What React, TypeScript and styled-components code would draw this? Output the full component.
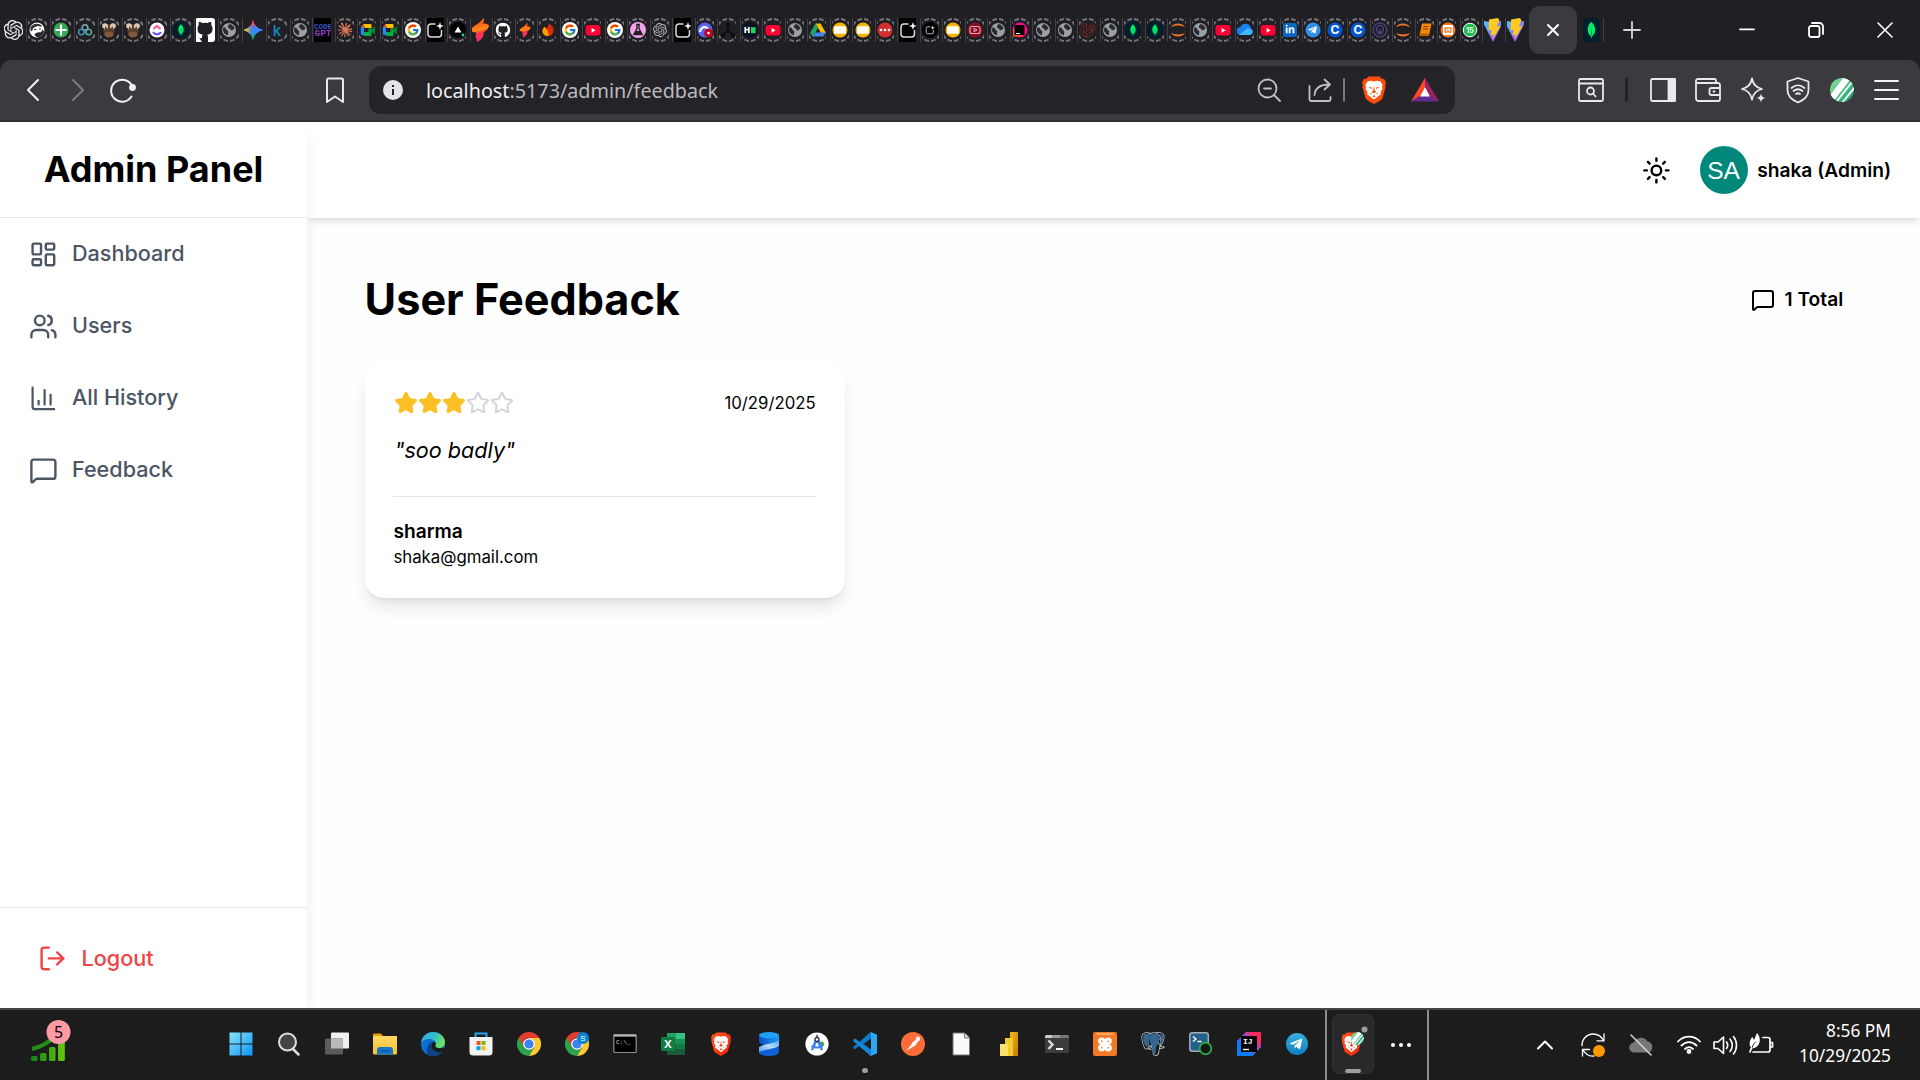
import React from "react";
import styled, { createGlobalStyle, css } from "styled-components";
import { LayoutDashboard, Users, MessageSquare, LogOut, Sun, Star } from "lucide-react";
import { FcGoogle } from "react-icons/fc";
import { FaTelegramPlane, FaGithub, FaLinkedinIn } from "react-icons/fa";
import {
  SiOpenai,
  SiLaravel,
  SiMongodb,
  SiXampp,
  SiPostgresql,
  SiClaude,
} from "react-icons/si";

const Global = createGlobalStyle`
  * { box-sizing: border-box; }
  body { margin: 0; background: #fff; overflow: hidden; font-family: Inter, "Liberation Sans", sans-serif; color: #000; }
  h1, h2, p { margin: 0; }
  svg { display: block; flex-shrink: 0; }
`;

/* ---------- shell ---------- */

const Screen = styled.div`
  width: 1920px;
  height: 1080px;
  display: flex;
  flex-direction: column;
  overflow: hidden;
`;

const TabStrip = styled.div`
  height: 60px;
  flex-shrink: 0;
  display: flex;
  align-items: center;
  padding-left: 1.7px;
  background: #201f24;
`;

const Tab = styled.div<{ $wide?: boolean; $first?: boolean }>`
  width: ${(p) => (p.$wide ? 24 : 22.5)}px;
  height: 24px;
  flex-shrink: 0;
  padding-left: 1.2px;
  border-left: 1px solid ${(p) => (p.$first ? "transparent" : "#403f44")};
`;

const Favicon = styled.div<{ $wide?: boolean }>`
  width: ${(p) => (p.$wide ? 19 : 17)}px;
  height: 24px;
  overflow: hidden;
  display: flex;
  justify-content: center;
`;

const ActiveTab = styled.div`
  width: 48px;
  height: 48px;
  margin-left: 1.5px;
  border-radius: 11px;
  background: #3b3a3f;
  display: flex;
  align-items: center;
  justify-content: center;
`;

const LastTab = styled.div`
  height: 24px;
  padding: 0 3px 0 6px;
  border-right: 1.5px solid #403f44;
`;

const NewTab = styled.div`
  margin-left: 19px;
`;

const WindowControls = styled.div`
  margin-left: auto;
  padding-right: 26px;
  display: flex;
  gap: 51px;
`;

const ToolbarWrap = styled.div`
  background: #201f24;
  flex-shrink: 0;
`;

const Toolbar = styled.div`
  height: 62px;
  border-radius: 12px 12px 0 0;
  background: #3b3a3f;
  border-bottom: 2px solid #323136;
  display: flex;
  align-items: center;
  padding: 0 20px 0 21px;
`;

const NavButtons = styled.div`
  display: flex;
  align-items: center;
  gap: 15px;
`;

const BookmarkSlot = styled.div`
  margin-left: 186px;
`;

const AddressBar = styled.div`
  width: 1086px;
  height: 48px;
  margin-left: 22px;
  padding: 0 16px 0 14px;
  border-radius: 12px;
  background: #242328;
  display: flex;
  align-items: center;
`;

const Url = styled.span`
  margin-left: 23px;
  flex: 1;
  font: 400 19.75px/27px "Noto Sans", "Open Sans", sans-serif;
  color: #b9b9be;
  b { font-weight: 400; color: #ededf2; }
`;

const AddressActions = styled.div`
  display: flex;
  align-items: center;
`;

const Gap = styled.span<{ $w: number }>`
  width: ${(p) => p.$w}px;
`;

const Rule = styled.span<{ $color: string; $w?: number; $h?: number }>`
  width: ${(p) => p.$w ?? 2}px;
  height: ${(p) => p.$h ?? 24}px;
  border-radius: 1px;
  background: ${(p) => p.$color};
`;

const Extensions = styled.div`
  margin-left: auto;
  display: flex;
  align-items: center;
`;

/* ---------- page ---------- */

const Page = styled.div`
  flex: 1;
  min-height: 0;
  display: flex;
  background: #fff;
`;

const Sidebar = styled.aside`
  width: 307px;
  flex-shrink: 0;
  display: flex;
  flex-direction: column;
  background: #fff;
  box-shadow: 0 12px 18px -3.6px rgba(0, 0, 0, 0.1), 0 4.8px 7.2px -4.8px rgba(0, 0, 0, 0.1);
  z-index: 2;
  clip-path: inset(0 -30px 0 0);
`;

const Brand = styled.h2`
  height: 96px;
  display: flex;
  align-items: center;
  justify-content: center;
  border-bottom: 1px solid #e5e7eb;
  font-size: 36px;
  font-weight: 700;
  line-height: 43px;
`;

const Nav = styled.nav`
  flex: 1;
`;

const itemBase = css`
  display: flex;
  align-items: center;
  gap: 14.4px;
  font-size: 21.6px;
  line-height: 33.6px;
  font-weight: 500;
`;

const NavItem = styled.a`
  ${itemBase}
  height: 72px;
  padding-left: 28.8px;
  color: #4b5563;
`;

const SidebarFooter = styled.div`
  height: 101px;
  padding: 1px 38.4px 0;
  border-top: 1px solid #e5e7eb;
  display: flex;
  align-items: center;
`;

const LogoutButton = styled.a`
  ${itemBase}
  color: #ef4444;
`;

const Main = styled.div`
  flex: 1;
  display: flex;
  flex-direction: column;
`;

const TopBar = styled.header`
  height: 96px;
  padding-right: 28.8px;
  display: flex;
  align-items: center;
  justify-content: flex-end;
  position: relative;
  z-index: 1;
  background: #fff;
  box-shadow: 0 4.8px 7.2px -1.2px rgba(0, 0, 0, 0.1), 0 2.4px 4.8px -2.4px rgba(0, 0, 0, 0.1);
`;

const Avatar = styled.div`
  width: 48px;
  height: 48px;
  margin: 0 9.6px 0 28.8px;
  border-radius: 50%;
  background: #00897b;
  color: #fff;
  display: flex;
  align-items: center;
  justify-content: center;
  font: 400 24.6px/49px "Liberation Sans", sans-serif;
`;

const UserName = styled.span`
  font-size: 19.2px;
  font-weight: 600;
`;

const Content = styled.main`
  flex: 1;
  padding: 57.6px;
  background: #fefefe;
`;

const TitleRow = styled.div`
  height: 48px;
  margin-bottom: 38.4px;
  padding-right: 19.2px;
  display: flex;
  align-items: center;
  justify-content: space-between;
`;

const Title = styled.h1`
  font-size: 43.2px;
  font-weight: 700;
  line-height: 49px;
`;

const Total = styled.div`
  display: flex;
  align-items: center;
  gap: 9.6px;
  font-size: 19.2px;
  font-weight: 600;
  line-height: 28.8px;
`;

const Card = styled.article`
  width: 480px;
  padding: 28.8px;
  border-radius: 19.2px;
  background: #fff;
  box-shadow: 0 12px 18px -3.6px rgba(0, 0, 0, 0.1), 0 4.8px 7.2px -4.8px rgba(0, 0, 0, 0.1);
`;

const CardHead = styled.div`
  height: 24px;
  margin-bottom: 19.2px;
  display: flex;
  align-items: center;
  justify-content: space-between;
`;

const Stars = styled.div`
  display: flex;
  padding-left: 1px;
`;

const DateText = styled.span`
  font-size: 16.8px;
  line-height: 24px;
`;

const Quote = styled.p`
  padding-left: 1px;
  font-size: 21.6px;
  line-height: 33.6px;
  font-style: italic;
  margin-bottom: 28.8px;
`;

const Author = styled.div`
  border-top: 1px solid #e5e7eb;
  padding-top: 19.2px;
`;

const AuthorName = styled.p`
  font-size: 19.2px;
  line-height: 28.8px;
  font-weight: 600;
`;

const AuthorMail = styled.p`
  font-size: 16.8px;
  line-height: 24px;
`;

/* ---------- taskbar ---------- */

const Taskbar = styled.footer`
  height: 72px;
  flex-shrink: 0;
  background: #1c1c1c;
  border-top: 2px solid #444;
  display: flex;
  align-items: center;
  padding-right: 29px;
`;

const Widget = styled.div`
  width: 217px;
  padding: 0 0 5px 28px;
`;

const Apps = styled.div`
  display: flex;
`;

const AppSlot = styled.div`
  width: 48.03px;
  height: 70px;
  display: flex;
  flex-direction: column;
  align-items: center;
  padding-top: 22px;
`;

const Running = styled.span<{ $w: number; $h: number; $top: number }>`
  width: ${(p) => p.$w}px;
  height: ${(p) => p.$h}px;
  margin-top: ${(p) => p.$top}px;
  border-radius: 3px;
  background: #9d9d9d;
`;

const ActiveApps = styled.div`
  width: 104px;
  height: 70px;
  margin-left: 4px;
  border: solid #8d8d8d;
  border-width: 0 2px;
  display: flex;
  align-items: center;
  padding-left: 5px;
  gap: 17px;
`;

const ActiveApp = styled.div`
  width: 42px;
  height: 60px;
  margin-top: -2px;
  border-radius: 7px;
  border: 1px solid #333;
  background: #292929;
  display: flex;
  flex-direction: column;
  align-items: center;
  padding-top: 9px;
`;

const Tray = styled.div`
  margin-left: auto;
  display: flex;
  align-items: center;
`;

const Clock = styled.div`
  width: 117.5px;
  padding-bottom: 3px;
  text-align: right;
  color: #fff;
  font: 400 17.3px/24.5px "Noto Sans", "Open Sans", sans-serif;
`;

/* ---------- favicons (24 x 24) ---------- */

const Ring = () => (
  <circle cx="12" cy="12" r="11" fill="none" stroke="#75747a" strokeWidth="2" pathLength="100"
    strokeDasharray="6.9 3.1" strokeDashoffset="-1.55" transform="rotate(-90 12 12)" />
);

const Globe = () => (
  <>
    <circle cx="12" cy="12" r="7" fill="#9aa0a6" />
    <path d="M6.6 9.2c2 .2 2.6 1 2.8 2.3.2 1 1.7.8 1.9 2 .2 1-.4 1.5-.3 3.7-2.7-.3-5-2.6-5.1-5.4zM12 6.3c2.8-.2 5.2 2 5.5 4.7-1.3.3-2 1.6-3.3 1.3-1.2-.3-.4-1.5-1.7-1.9-1.3-.4-2.1-1.3-1.5-2.3.3-.6 1-.8 1-1.8z" fill="#2a2a2f" />
  </>
);

const Leaf = () => <SiMongodb x={6} y={6} size={12} color="#00ed64" />;
const Youtube = () => (
  <>
    <rect x="4.5" y="7" width="15" height="10.6" rx="3" fill="#ff0033" />
    <path d="M10.6 9.9v4.8l4-2.4z" fill="#fff" />
  </>
);
const Vite = () => (
  <>
    <path d="M1 2.6 12 24 23 2.6 12 4.5z" fill="url(#viteBody)" />
    <path d="M17 0 8 1.6 7.5 12.500l3.2-.7-1.2 5.700 3.200-.9-1.200 5L19.500 8l-3.700.6L18.500 2.500z" fill="#ffc91f" />
  </>
);
const Meet = () => (
  <>
    <path d="M5 8.500 8 6h6.500a1 1 0 0 1 1 1v3h-7v-1.500z" fill="#fbbc04" />
    <path d="M4.800 9H8v8H6a1.200 1.200 0 0 1-1.200-1.200z" fill="#2684fc" />
    <path d="M8 14h4.500v-3.500h3V17a1 1 0 0 1-1 1H8z" fill="#00ac47" />
    <path d="M15 11.500 19 8v8.500l-4-3.200z" fill="#00832d" />
    <path d="M4.800 9 8 6v3z" fill="#ea4335" />
  </>
);
const Donkey = () => (
  <>
    <ellipse cx="12" cy="13" rx="5.600" ry="6.500" fill="#5d4030" />
    <path d="M5.500 6c2-1.500 4.500-1 5.500 1v3L8 11.500 5 9zM18.500 6c-2-1.500-4.500-1-5.500 1v3l3 1.500L19 9z" fill="#d9c6ac" />
    <path d="M8 8.500 10 10l-1.500 2zM16 8.500 14 10l1.500 2z" fill="#2a1b14" />
    <ellipse cx="12" cy="16.500" rx="4.400" ry="2.800" fill="#84583c" />
  </>
);
const Sparkle = ({ small }: { small?: boolean }) => (
  <g transform={small ? "translate(5.500 5.500) scale(.54)" : undefined}>
    <path d="M12.500 6H8a3 3 0 0 0-3 3v7a3 3 0 0 0 3 3h7.500a3 3 0 0 0 3-3v-4" fill="none" stroke="#ddd" strokeWidth="1.500" />
    <path d="m17 4 1 3 3 1-3 1-1 3-1-3-3-1 3-1z" fill="#fff" />
  </g>
);
const Swoosh = () => (
  <path d="M14.500 4.500c.3 1.500 0 2.600-.8 3.800 1.700-.2 3 .2 4 1.200-.6 1.700-1.700 3-3.300 4 .3 2.300-1.100 4.500-4.200 6 .1-1.500-.2-2.600-1-3.500.5-.9.7-1.600.6-2.400-1.300.2-2.500-.3-3.400-1.400C7.500 9.500 11.500 9 14.500 4.500z" fill="url(#swoosh)" />
);
const Flame = () => (
  <>
    <path d="M12.500 5c3 2.500 5.500 4 5 8-.4 3.500-2.800 5-5.500 5s-5.300-1.700-5.500-4.800C6.400 11 8 10.300 8.500 8.500c1 .6 1.500 1 2 2 1.200-1.500 2.200-3 2-5.500z" fill="#dd2c00" />
    <path d="M8 9c3 2 5 4 4.500 9-3 .3-6-1.500-6-5C6.500 11 7.500 10.500 8 9z" fill="#ffa000" />
  </>
);
const Slides = () => (
  <>
    <circle cx="12" cy="12" r="7.500" fill="#f4b400" /><rect x="6.200" y="8.200" width="11.600" height="7.500" rx=".6" fill="#fff" />
  </>
);
const Jupyter = () => (
  <path d="M4.800 9.200C8 4.200 16 4.200 19.200 9.200 15.500 6.900 8.500 6.900 4.800 9.200zM4.800 14.800c3.200 5 11.200 5 14.400 0-3.700 2.300-10.700 2.300-14.400 0z" fill="#f37726" />
);
const Letter = ({ c, fill, size = 11, y = 16 }: { c: string; fill: string; size?: number; y?: number }) => (
  <text x="12" y={y} textAnchor="middle" fill={fill} fontFamily="Inter, sans-serif" fontWeight="700" fontSize={size}>{c}</text>
);
const Disc = ({ fill, r = 7.5 }: { fill: string; r?: number }) => <circle cx="12" cy="12" r={r} fill={fill} />;

type Glyph = { bare?: boolean; art: React.ReactNode };

const geminiStar = "M12 1c1 6.500 4.500 10 11 11-6.500 1-10 4.500-11 11C11 16.500 7.500 13 1 12 7.500 11 11 7.500 12 1z";

const glyphs: Record<string, Glyph> = {
  openaiBare: { bare: true, art: <SiOpenai x={2.5} y={2} size={20} color="#eee" /> },
  person: { art: <><Disc fill="#fff" /><path d="M5.500 9.500C7 6 12 4.500 16 7l1 2-4-1-3 1-2 1.500-1 3-1.500-1z" fill="#3a3334" /><path d="M9.500 16.500c1.500-2 4-2.500 6-2l2.500-3 1 2.500c-.5 2.500-2.500 4.500-5 5.200-2 .2-4-.7-4.500-2.700z" fill="#29252a" /><path d="M9 11.500h2.500M14 11h2" stroke="#3a3334" strokeWidth="1.200" /></> },
  plus: { art: <><Disc fill="#34a853" /><path d="M12 6.500v11M6.500 12h11" stroke="#fff" strokeWidth="2" /></> },
  loops: { art: <g fill="none" strokeWidth="1.600"><circle cx="12" cy="9.500" r="2.800" stroke="#7fa6b8" /><circle cx="8.300" cy="14" r="2.800" stroke="#3e93b5" /><circle cx="15.700" cy="14" r="2.800" stroke="#5aa8a0" /></g> },
  donkey: { art: <Donkey /> },
  clickup: { art: <><Disc fill="#fff" /><path d="m8.500 11 3.500-3.200 3.500 3.200" fill="none" stroke="#f5509a" strokeWidth="2" /><path d="M8 14.200c2 2.800 6 2.800 8 0" fill="none" stroke="#6a5cff" strokeWidth="2.200" /></> },
  mongo: { art: <><Disc fill="#001e2b" r={8.5} /><Leaf /></> },
  githubBare: { bare: true, art: <><rect x="2" width="20" height="24" rx="3" fill="#fff" /><path d="M9 24v-4c-3 .6-3.500-1-4-2M15 24v-5c0-1-.3-1.700-.8-2.200 3.600-.5 5.300-2.300 5.300-6 0-1.600-.5-2.800-1.300-3.700.3-1.200.2-2.300-.2-3.300-1.400.1-2.500.6-3.500 1.300a11 11 0 0 0-5 0C8.500 4.400 7.400 4 6 3.800c-.4 1-.5 2.100-.2 3.300-.8.900-1.300 2.100-1.300 3.700 0 3.700 1.700 5.500 5.300 6-.4.400-.7 1-.8 1.700V24z" fill="#201f24" /></> },
  globe: { art: <Globe /> },
  gemini: { bare: true, art: <><path d={geminiStar} fill="url(#gemV)" /><path d={geminiStar} fill="url(#gemH)" /></> },
  kaggle: { art: <text x="12" y="17.500" textAnchor="middle" fill="#0d8fbf" fontFamily="Inter, sans-serif" fontWeight="500" fontSize="15">k</text> },
  codegpt: { bare: true, art: <><rect width="24" height="24" fill="#000" /><text x="12" y="11" textAnchor="middle" fill="#3d55c0" fontFamily="Liberation Mono, monospace" fontWeight="700" fontSize="7.500">CODE</text><text x="12" y="18" textAnchor="middle" fill="#8840c8" fontFamily="Liberation Mono, monospace" fontWeight="700" fontSize="9.500">GPT</text></> },
  claude: { art: <SiClaude x={4.5} y={4.5} size={15} color="#d97757" /> },
  meet: { art: <Meet /> },
  google: { art: <><Disc fill="#fff" r={8} /><FcGoogle x={5.5} y={5.5} size={13} /></> },
  sparkBox: { bare: true, art: <><rect width="24" height="24" fill="#000" /><Sparkle /></> },
  sparkDisc: { art: <><Disc fill="#000" r={8} /><Sparkle small /></> },
  vercel: { art: <><Disc fill="#000" r={8} /><path d="m12 8.500 3.500 6h-7z" fill="#fff" /><circle cx="17" cy="17" r="1.400" fill="#16d3b0" /></> },
  swooshBare: { bare: true, art: <g transform="translate(-8 -8) scale(1.650)"><Swoosh /></g> },
  github: { art: <FaGithub x={4.5} y={4.5} size={15} color="#fff" /> },
  swoosh: { art: <Swoosh /> },
  flame: { art: <Flame /> },
  youtube: { art: <Youtube /> },
  flask: { art: <><Disc fill="#f5a3ec" r={8} /><path d="M10 6.500h4M11 6.500v4L7.800 16.500h8.400L13 10.500v-4" fill="none" stroke="#222" strokeWidth="1.400" /><path d="m9.800 13-2 3.500h8.400l-2-3.500z" fill="#222" /></> },
  openai: { art: <SiOpenai x={5} y={5} size={14} color="#b8b8bb" /> },
  discord: { art: <><Disc fill="#5865f2" /><path d="M7 14c.5-4 3-5.500 6.500-4.500l3 3" fill="none" stroke="#fff" strokeWidth="2.200" /><circle cx="15.500" cy="15" r="4.400" fill="#c4001d" /><circle cx="15.500" cy="15" r="1.300" fill="#fff" /></> },
  nodes: { art: <g stroke="#0c0c0e" strokeWidth="1.400" fill="#0c0c0e"><path d="M12 6v7l-5 4M12 13l5 4" fill="none" /><circle cx="12" cy="6.500" r="1.300" /><circle cx="7" cy="17" r="1.300" /><circle cx="17" cy="17" r="1.300" /></g> },
  he: { art: <><Disc fill="#0a1022" r={8} /><text x="9" y="15" textAnchor="middle" fill="#fff" fontFamily="Inter, sans-serif" fontWeight="900" fontSize="8">H</text><rect x="13" y="9.200" width="4.600" height="6" fill="#1ed760" /></> },
  drive: { art: <><path d="M9.500 5.500h5L20 15h-5z" fill="#fbbc04" /><path d="M9.500 5.500 12 10l-5 9-3-4z" fill="#1fa463" /><path d="M9.500 14.500H20L17.500 18.500H7z" fill="#4285f4" /></> },
  slides: { art: <Slides /> },
  dots: { art: <><Disc fill="#d32f2f" /><g fill="#fff"><circle cx="8" cy="12" r="1.300" /><circle cx="12" cy="12" r="1.300" /><circle cx="16" cy="12" r="1.300" /></g></> },
  darkTube: { art: <><Disc fill="#8c0d22" /><rect x="7" y="8.500" width="10" height="7" rx="2" fill="none" stroke="#e7a9b2" strokeWidth="1.100" /><path d="M11 10.300v3.400l3-1.700z" fill="none" stroke="#e7a9b2" /></> },
  jet: { art: <><Disc fill="#ff0a8a" /><path d="M5 11v7.500h8l4-3z" fill="#ff5a2c" /><rect x="6.500" y="7" width="10" height="10" fill="#000" /><path d="M8 15.500h4" stroke="#fff" /></> },
  laravel: { art: <SiLaravel x={4.5} y={4.5} size={15} color="#b82a1e" /> },
  jupyter: { art: <Jupyter /> },
  cloud: { art: <><path d="M8 17a4 4 0 0 1-.5-8A5.500 5.500 0 0 1 18 10.500 3.400 3.400 0 0 1 17.500 17z" fill="#1a7ff0" /><path d="m6 17 8-6.500c2-1 5 .5 5 3.300 0 2-1.500 3.200-3 3.200z" fill="#43b8ff" /></> },
  linkedin: { art: <><rect x="5" y="5" width="14" height="14" rx="2.500" fill="#0a66c2" /><FaLinkedinIn x={7} y={6.5} size={10} color="#fff" /></> },
  telegram: { art: <><Disc fill="#2f8fe8" /><FaTelegramPlane x={6.5} y={7} size={10} color="#fff" /></> },
  coursera: { art: <><Disc fill="#0056d2" /><Letter c="C" fill="#fff" size={12} y={16.4} /></> },
  purple: { art: <g fill="none" stroke="#5d4c9c"><circle cx="12" cy="12" r="6.800" strokeWidth="1.200" strokeDasharray="2 .6" /><circle cx="12" cy="11" r="3.600" /><path d="M12 11v6M9 16c1-2 5-2 6 0" /></g> },
  book: { art: <><path d="M9 5.500h9.500l-2.500 12H6.500z" fill="#f58a07" /><path d="M6.500 15.500h9.800l-.4 2.500H7z" fill="#c25e00" /><path d="M10.500 8.500h5M10 11h5" stroke="#7a3a00" /></> },
  xampp: { art: <><Disc fill="#f37623" /><SiXampp x={7} y={7} size={10} color="#fff" /></> },
  fifteen: { art: <><Disc fill="#1bbf4b" r={6.8} /><circle cx="12" cy="12" r="6.800" fill="none" stroke="#fff" strokeWidth="1" /><Letter c="15" fill="#fff" size={7} y={14.5} /></> },
  vite: { bare: true, art: <Vite /> },
};

const wideTabs = "openaiBare person plus loops donkey donkey clickup mongo githubBare globe gemini kaggle".split(" ");
const narrowTabs = (
  "globe codegpt claude meet meet google sparkBox vercel swooshBare github swoosh flame google youtube google flask openai sparkBox " +
  "discord nodes he youtube globe drive slides slides dots sparkBox sparkDisc slides darkTube globe jet globe globe laravel globe " +
  "mongo mongo jupyter globe youtube cloud youtube linkedin telegram coursera coursera purple jupyter book xampp fifteen vite vite"
).split(" ");

const Fav = ({ name, wide }: { name: string; wide?: boolean }) => (
  <Favicon $wide={wide}>
    <svg width="24" height="24" viewBox="0 0 24 24">
      {!glyphs[name].bare && <Ring />}
      {glyphs[name].art}
    </svg>
  </Favicon>
);

const GradientDefs = styled.svg`
  position: absolute;
  width: 0;
  height: 0;
`;

const Gradients = () => (
  <GradientDefs>
    <defs>
      <linearGradient id="gemV" x1="0" y1="0" x2="0" y2="1"><stop offset="0" stopColor="#ff3d3d" /><stop offset=".22" stopColor="#e8506a" /><stop offset=".42" stopColor="#3c86f5" /><stop offset=".62" stopColor="#3c86f5" /><stop offset=".85" stopColor="#12b25a" /><stop offset="1" stopColor="#0fb452" /></linearGradient>
      <linearGradient id="gemH" x1="0" y1="0" x2="1" y2="0"><stop offset="0" stopColor="#f9c20a" /><stop offset=".2" stopColor="#e9bd20" /><stop offset=".42" stopColor="#f9c20a" stopOpacity="0" /></linearGradient>
      <linearGradient id="swoosh" x1=".4" y1="0" x2=".6" y2="1"><stop offset="0" stopColor="#ff3a1a" /><stop offset=".5" stopColor="#ff8a1c" /><stop offset=".6" stopColor="#fb3a3f" /><stop offset="1" stopColor="#f02a8a" /></linearGradient>
      <linearGradient id="viteBody" x1="0" y1="0" x2="1" y2="1"><stop offset="0" stopColor="#41d1ff" /><stop offset="1" stopColor="#bd34fe" /></linearGradient>
      <linearGradient id="win" x1="0" y1="0" x2="1" y2="1"><stop offset="0" stopColor="#8be3ff" /><stop offset="1" stopColor="#0a94f5" /></linearGradient>
      <linearGradient id="folder" x1="0" y1="0" x2="0" y2="1"><stop offset="0" stopColor="#ffd968" /><stop offset="1" stopColor="#fcbf25" /></linearGradient>
      <linearGradient id="edgeTop" x1="0" y1="0" x2="1" y2=".4"><stop offset="0" stopColor="#2aa9e8" /><stop offset=".6" stopColor="#35c1c9" /><stop offset="1" stopColor="#6be35c" /></linearGradient>
      <linearGradient id="blueCyl" x1="0" y1="0" x2="1" y2="0"><stop offset="0" stopColor="#0a4fc4" /><stop offset="1" stopColor="#1c9cff" /></linearGradient>
      <linearGradient id="band" x1="0" y1="1" x2="1" y2="0"><stop offset="0" stopColor="#4d9ff0" /><stop offset=".5" stopColor="#b5dcfb" /><stop offset="1" stopColor="#5fa9f3" /></linearGradient>
      <linearGradient id="tg" x1="0" y1="0" x2="0" y2="1"><stop offset="0" stopColor="#37aee2" /><stop offset="1" stopColor="#0f7fc0" /></linearGradient>
      <linearGradient id="chart" x1="3" y1="0" x2="37" y2="0" gradientUnits="userSpaceOnUse"><stop offset="0" stopColor="#168016" /><stop offset="1" stopColor="#66c80a" /></linearGradient>
      <linearGradient id="brave" x1="0" y1="0" x2="1" y2="1"><stop offset="0" stopColor="#ff5a1f" /><stop offset="1" stopColor="#f5200a" /></linearGradient>
      <linearGradient id="ij" x1="0" y1="1" x2="1" y2="0"><stop offset=".3" stopColor="#087cfa" /><stop offset=".6" stopColor="#a04ad0" /><stop offset=".8" stopColor="#fe2857" /></linearGradient>
      <linearGradient id="leafDisc" x1="0" y1="0" x2="1" y2="1"><stop offset="0" stopColor="#8fe39c" /><stop offset="1" stopColor="#0b9a6d" /></linearGradient>
      <linearGradient id="pbi" x1="0" y1="0" x2="1" y2="1"><stop offset="0" stopColor="#f0b90f" /><stop offset="1" stopColor="#c8780c" /></linearGradient>
    </defs>
  </GradientDefs>
);

/* ---------- shared art ---------- */

const Lion = ({ fill = "#ff4e0a", w = 24, h = 28 }: { fill?: string; w?: number; h?: number }) => (
  <svg width={w} height={h} viewBox="0 0 24 28" preserveAspectRatio="none">
    <path d="M6.500.5h11L20 3l2-.3L24 6.500l-.8 2.700.5 1.300-3.200 11.500c-.6 2-6.500 5-8.500 6-2-1-7.900-4-8.500-6L.3 10.500l.5-1.300L0 6.500l2-3.800L4 3z" fill={fill} />
    <path d="m12 5.500 3-.8 3.200.5 2.300 3.300-.5 3 .5 1.500-2 3 .5 2-3 2.500L12 23.500 8 20.500 5 18l.5-2-2-3 .5-1.500-.5-3 2.300-3.300L9 4.700z" fill="#fff" />
    <path d="m6 10.500 4.300 1.200-.8 1.400zM18 10.500l-4.300 1.200.8 1.400zM12 10l.8 4.500 1.600 1.200L12 17.200l-2.400-1.500 1.600-1.200zM6.500 14.500l1.300 2.600 2.200.5-1.600.9zM17.500 14.500l-1.300 2.600-2.200.5 1.600.9zM12 19l1.500 1.200L12 21.500l-1.500-1.300z" fill={fill} />
  </svg>
);

const Striped = ({ size = 24 }: { size?: number }) => (
  <svg width={size} height={size} viewBox="0 0 24 24">
    <clipPath id="stripeClip"><circle cx="12" cy="12" r="12" /></clipPath>
    <g clipPath="url(#stripeClip)">
      <rect width="24" height="24" fill="url(#leafDisc)" />
      <path d="M2 20 18-1" stroke="#fff" strokeWidth="6.500" />
      <path d="M7 23 22 4M12 25 25 9" stroke="#fff" strokeWidth="2" />
    </g>
  </svg>
);

const Line = ({ w = 24, h = 24, color = "#e8e8ed", sw = 1.8, children }: { w?: number; h?: number; color?: string; sw?: number; children: React.ReactNode }) => (
  <svg width={w} height={h} viewBox={`0 0 ${w} ${h}`} fill="none" stroke={color} strokeWidth={sw} strokeLinecap="round" strokeLinejoin="round">{children}</svg>
);

const Chrome = ({ badge }: { badge?: boolean }) => (
  <svg width="24" height="24" viewBox="0 0 24 24">
    <path d="M12 12 1.600 6A12 12 0 0 0 12 24l5.200-9z" fill="#2ba24c" />
    <path d="M12 6h10.400A12 12 0 0 1 12 24l5.200-9z" fill="#fcc934" />
    <path d="M1.600 6A12 12 0 0 1 22.400 6H12a6 6 0 0 0-5.200 9z" fill="#e33b2e" />
    <circle cx="12" cy="12" r="5.800" fill="#fff" /><circle cx="12" cy="12" r="4.600" fill="#3b82f0" />
    {badge && <><circle cx="18" cy="6" r="6" fill="#0b84d0" /><text x="18" y="9" textAnchor="middle" fontSize="8" fill="#fff" fontFamily="Liberation Sans, sans-serif">S</text></>}
  </svg>
);

const Svg = ({ children }: { children: React.ReactNode }) => <svg width="24" height="24" viewBox="0 0 24 24">{children}</svg>;

const apps: { id: string; art: React.ReactNode; running?: boolean }[] = [
  { id: "start", art: <Svg><path d="M.5.5h11v11H.5zM12.500.5h11v11h-11zM.5 12.500h11v11H.5zM12.500 12.500h11v11h-11z" fill="url(#win)" /></Svg> },
  { id: "search", art: <Svg><circle cx="10.500" cy="10" r="8.500" fill="#444" stroke="#dcdfe2" strokeWidth="2" /><path d="m16 17 5.500 5.500" stroke="#dcdfe2" strokeWidth="2.500" strokeLinecap="round" /></Svg> },
  { id: "taskview", art: <Svg><rect x="6" y=".5" width="18" height="16" rx="1" fill="#f1f1f1" /><rect y="6.500" width="18" height="16" rx="1" fill="#5c5c5c" /><path d="M6 6.500h12v10H6z" fill="#b9b9b9" /></Svg> },
  { id: "files", art: <Svg><path d="M0 2.500A1 1 0 0 1 1 1.500h7l2 2.500h13a1 1 0 0 1 1 1V9H0z" fill="#e2a00c" /><rect y="4" width="24" height="18.500" rx="1" fill="url(#folder)" /><path d="M4 22.500V18a3 3 0 0 1 3-3h10a3 3 0 0 1 3 3v4.500z" fill="#1277c9" /><path d="M7.500 19h9" stroke="#0b4f90" strokeWidth="1.200" /></Svg> },
  { id: "edge", art: <Svg><circle cx="12" cy="12" r="12" fill="#0c6fcf" /><path d="M0 11C1 4 6 0 12 0c7 0 12 5 12 10 0 4-3 6-6 6-2.500 0-4-.8-4-1.700 0-.6.9-1 .9-2.500C14.900 9.500 12.500 7 8.500 7 4 7 1 9 0 11z" fill="url(#edgeTop)" /><path d="M8.500 24C4 22 6 11 11 10c-2 2.500-1.500 8 3 10 3 1.200 6 .6 8-1.500-2 4-8 7-13.500 5.500z" fill="#103f86" /><path d="M14.200 14c.6-1 .8-3-.5-4.500-2.500 0-4 3-3.200 5.800.6 2 2 3.700 4.500 4.700 3 1 6 .3 7.500-1.500 1-1.500.5-3-.5-2.800-3 1-7 .5-7.800-1.700z" fill="#1c1c1c" /></Svg> },
  { id: "store", art: <Svg><path d="M6.500 6V1.500h11V6" fill="none" stroke="#22a7f0" strokeWidth="2" /><path d="M.5 5h23v15a3.500 3.500 0 0 1-3.500 3.500H4A3.500 3.500 0 0 1 .5 20z" fill="#f3f3f3" /><path d="M7.500 9h4v4h-4z" fill="#f25022" /><path d="M12.500 9h4v4h-4z" fill="#7fba00" /><path d="M7.500 14.200h4v4h-4z" fill="#00a4ef" /><path d="M12.500 14.200h4v4h-4z" fill="#ffb900" /></Svg> },
  { id: "chrome", art: <Chrome /> },
  { id: "chrome2", art: <Chrome badge /> },
  { id: "cmd", art: <Svg><rect x=".8" y="2.500" width="22.400" height="18" rx="1" fill="#000" stroke="#8e9196" strokeWidth="1.200" /><path d="M.8 3.800h22.400" stroke="#b8bcc0" strokeWidth="1.600" /><text x="3" y="11.500" fontSize="6" fill="#ddd" fontFamily="Liberation Mono, monospace">C:\_</text></Svg> },
  { id: "excel", art: <Svg><path d="M6 1h18v22H6z" fill="#21a366" /><path d="M15 1h9v6h-9z" fill="#33c481" /><path d="M6 7h18v5H6z" fill="#159154" /><path d="M6 12h18v11H6z" fill="#185c37" /><path d="M15 12h9v5h-9z" fill="#107c41" /><rect y="5" width="14" height="14" rx="1" fill="#107c41" /><text x="7" y="16" textAnchor="middle" fontSize="11" fontWeight="700" fill="#fff" fontFamily="Open Sans, sans-serif">X</text></Svg> },
  { id: "brave", art: <Lion fill="url(#brave)" w={20} h={24} /> },
  { id: "coil", art: <Svg><path d="M2 3.500C4 7 20 7 22 3.500V9c-3 2.500-9 3-13 4.500C5 13 2 11.500 2 9z" fill="url(#blueCyl)" /><path d="M2 20.500V16c2-1 9-2.500 14-4.500 4 1 6 2.500 6 4.500v4.500c-1 4.500-19 4.500-20 0z" fill="#1160d8" /><path d="M22 8v5.500C20 17 4 17.500 2 20.500V15.500C4 12 20 11.500 22 8z" fill="url(#band)" /><ellipse cx="12" cy="3.300" rx="10" ry="3.200" fill="#1fa0fb" /></Svg> },
  { id: "astudio", art: <Svg><circle cx="12" cy="12" r="11.600" fill="#fff" /><circle cx="16.500" cy="12" r="2.500" fill="#3aa757" /><path d="M10 7h4l4 11-2 .5L12 10 8 18.500 6 18z" fill="#3f7ff2" /><path d="M6.500 14c3 2 8 2 11 0" fill="none" stroke="#3f7ff2" strokeWidth="2.200" /><circle cx="12" cy="7.500" r="2" fill="#fff" stroke="#2a3350" strokeWidth="1.300" /><path d="M12 3v3" stroke="#2a3350" strokeWidth="1.500" /></Svg> },
  { id: "vscode", running: true, art: <Svg><path d="M17.500 0 24 2.800v18.400L17.500 24 6.500 13.500 2 17.300.3 16.200v-1.500L4 12z" fill="#0f78c4" /><path d="m.3 7.800 1.800-1.200L18 18.200V24L.3 9.200z" fill="#1687d6" /><path d="M17.500 0 24 2.800v18.400L17.500 24c.5-.3.5-.6.5-1V1c0-.4 0-.7-.5-1z" fill="#2aa8f2" /><path d="M18 6.500v11L10.700 12z" fill="#1c1c1c" /></Svg> },
  { id: "postman", art: <Svg><circle cx="12" cy="12" r="12" fill="#ff6c37" /><path d="m5 19 7-8.500 3 2.500z" fill="#fff" /><path d="m11 11 4.500-4 2 2L13.500 14z" fill="#fff" /><circle cx="17" cy="6.800" r="2.200" fill="#fff" /></Svg> },
  { id: "file", art: <Svg><path d="M4 1h11.500l5 5v17H4z" fill="#fafafa" stroke="#777" /><path d="M15.500 1v5h5" fill="#ddd" stroke="#777" /></Svg> },
  { id: "powerbi", art: <Svg><rect x="13" width="8" height="24" rx=".5" fill="url(#pbi)" /><path d="M8 6h8v18H8z" fill="#f3c92d" /><path d="M3 12h8v12H3z" fill="#fae16a" /></Svg> },
  { id: "terminal", art: <Svg><rect y="3" width="24" height="18" rx="1.500" fill="#3c3c3c" /><path d="M0 6V4.500A1.500 1.500 0 0 1 1.500 3h6v3z" fill="#ccc" /><path d="M7.500 3h8v3h-8z" fill="#999" /><path d="M15.500 3h7A1.500 1.500 0 0 1 24 4.500V6h-8.500z" fill="#777" /><path d="m3.500 8.500 4 4-4 4.500" fill="none" stroke="#ddd" strokeWidth="2.400" /><path d="M11 17h7" stroke="#fff" strokeWidth="2" /></Svg> },
  { id: "xampp", art: <Svg><rect width="24" height="24" rx="2" fill="#f37a24" /><path d="M3.500 2h17" stroke="#ffb98a" strokeWidth="1.400" /><rect x="6.500" y="7" width="4.500" height="4.500" rx="2.250" fill="none" stroke="#fff" strokeWidth="2.800" /><rect x="13" y="7" width="4.500" height="4.500" rx="2.250" fill="none" stroke="#fff" strokeWidth="2.800" /><rect x="6.500" y="13.500" width="4.500" height="4.500" rx="2.250" fill="none" stroke="#fff" strokeWidth="2.800" /><rect x="13" y="13.500" width="4.500" height="4.500" rx="2.250" fill="none" stroke="#fff" strokeWidth="2.800" /><path d="M10 10.500h4v4h-4z" fill="#fff" /><path d="M3 11.300h3.500v2.200H3zM17.500 11.300H21v2.200h-3.500z" fill="#f37a24" /></Svg> },
  { id: "postgres", art: <Svg><SiPostgresql x={0} y={0} size={24} color="#c2d0db" /><path d="M3 2.500c3-1.500 5-.5 6 .5l-1 9-2.500 3C3 13 1 6 3 2.500zM10 2c4-1.500 8 0 8 5 0 4-2 7-3 8l-.5 7h-3l-.5-8c-2-2-3-8-1-12zM19 2c3 .5 4.500 3 3 6.500l-3 4c.5-4 1-7 0-10.500z" fill="#336791" /></Svg> },
  { id: "psql", art: <Svg><rect x=".8" y=".8" width="18.500" height="18.500" rx="2.500" fill="#23618c" stroke="#a4adb5" strokeWidth="1.500" /><path d="m4 4.500 3 2.500-3 2.500M8.500 9.500h4" fill="none" stroke="#fff" strokeWidth="1.400" /><circle cx="16.500" cy="16.500" r="5.800" fill="#101a12" stroke="#31a843" strokeWidth="1.800" /></Svg> },
  { id: "idea", art: <Svg><path d="M0 9 6 3 9 0h15v15l-8.500 9H0z" fill="url(#ij)" /><path d="M4 4h16v16H4z" fill="#000" /><path d="M6 17.500h6" stroke="#fff" strokeWidth="1.400" /><text x="6" y="11.500" fontSize="8" fontWeight="700" fill="#fff" fontFamily="Liberation Mono, monospace">IJ</text></Svg> },
  { id: "telegram", art: <Svg><circle cx="12" cy="12" r="11" fill="url(#tg)" /><FaTelegramPlane x={4} y={5} size={14} color="#fff" /></Svg> },
];

const HistoryIcon = () => (
  <svg width="28.8" height="28.8" viewBox="0 0 24 24" fill="none" stroke="currentColor" strokeWidth="1.850" strokeLinecap="round" strokeLinejoin="round">
    <path d="M3 3v16a2 2 0 0 0 2 2h16" /><path d="M18 17V9" /><path d="M13 17V5" /><path d="M8 17v-3" />
  </svg>
);

const MessageBox = ({ size }: { size: number }) => (
  <svg width={size} height={size} viewBox="0 0 24 24" fill="none" stroke="currentColor" strokeWidth="2" strokeLinecap="round" strokeLinejoin="round">
    <path d="M21 15a2 2 0 0 1-2 2H7l-4 4V5a2 2 0 0 1 2-2h14a2 2 0 0 1 2 2z" />
  </svg>
);

/* ---------- sections ---------- */

const Tabs = () => (
  <TabStrip>
    {wideTabs.map((n, i) => <Tab key={i} $wide $first={i === 0}><Fav name={n} wide /></Tab>)}
    {narrowTabs.map((n, i) => <Tab key={i}><Fav name={n} /></Tab>)}
    <ActiveTab>
      <Line w={14} h={14} color="#fff" sw={2}><path d="m2 2 10 10M12 2 2 12" /></Line>
    </ActiveTab>
    <LastTab>
      <Favicon>
        <svg width="17" height="24" viewBox="0 0 17 24"><rect width="17" height="24" rx="5" fill="#001e2b" /><SiMongodb x={0} y={3.5} size={17} color="#00ed64" /></svg>
      </Favicon>
    </LastTab>
    <NewTab><Line w={18} h={18} color="#d6d6da"><path d="M9 1v16M1 9h16" /></Line></NewTab>
    <WindowControls>
      <Line w={18} h={18} color="#fff" sw={1.8}><path d="M2 8.300h14" /></Line>
      <Line w={18} h={18} color="#fff" sw={1.8}><rect x="2" y="5" width="10.500" height="11" rx="2" /><path d="M5 2h7.500A3.500 3.500 0 0 1 16 5.500V13" /></Line>
      <Line w={18} h={18} color="#fff" sw={1.6}><path d="m2 2 14 14M16 2 2 16" /></Line>
    </WindowControls>
  </TabStrip>
);

const BrowserBar = () => (
  <ToolbarWrap>
    <Toolbar>
      <NavButtons>
        <Line w={28} h={28} color="#f2f2f6" sw={2}><path d="M17 4 7 14l10 10" /></Line>
        <Line w={28} h={28} color="#7c7b80" sw={2}><path d="m9 4 10 10L9 24" /></Line>
        <Line w={30} h={28} color="#f2f2f6" sw={2}><path d="M24.500 20.500A11 11 0 1 1 25.500 11" /><circle cx="25.500" cy="11.500" r="2.400" fill="#f2f2f6" /></Line>
      </NavButtons>
      <BookmarkSlot><Line w={24} h={28} sw={2}><path d="M4 4a1.500 1.500 0 0 1 1.500-1.500h13A1.500 1.500 0 0 1 20 4v22l-8-5.500L4 26z" /></Line></BookmarkSlot>
      <AddressBar>
        <svg width="20" height="20" viewBox="0 0 20 20"><circle cx="10" cy="10" r="10" fill="#e3e3e8" /><path d="M10 9v6M10 5v2" stroke="#242328" strokeWidth="2" /></svg>
        <Url><b>localhost</b>:5173/admin/feedback</Url>
        <AddressActions>
          <Line color="#bfbfc4"><circle cx="10.500" cy="10.500" r="9" /><path d="m17 17 6 6M7 10.500h7" /></Line>
          <Gap $w={27} />
          <Line color="#bfbfc4"><path d="M1.500 8v13.500A1.500 1.500 0 0 0 3 23h18a1.500 1.500 0 0 0 1.500-1.500V19M6.500 17c.5-6 4-10.500 15-10.500M16.500 1.500l5.500 5-5.500 5" /></Line>
          <Gap $w={11} />
          <Rule $color="#7b7a7f" />
          <Gap $w={17} />
          <Lion />
          <Gap $w={25} />
          <svg width="28" height="24" viewBox="0 0 28 24"><path d="M14 0 0 23.500 9 18l5-9z" fill="#ff4724" /><path d="M14 0v9l5 9 9 5.500z" fill="#9e1f63" /><path d="M0 23.500 9 18h10l9 5.500z" fill="#662d91" /><path d="m14 9 5 9.500H9z" fill="#fff" /></svg>
        </AddressActions>
      </AddressBar>
      <Extensions>
        <Line w={26}><rect x="1" y="1" width="24" height="22" rx="1.500" /><path d="M1 5.500h24" /><circle cx="12.500" cy="13" r="3.500" /><path d="m15 15.500 2.500 3" /></Line>
        <Gap $w={21} />
        <Rule $color="#232227" $w={3} />
        <Gap $w={22} />
        <Line w={26}><rect x="1" y="1" width="24" height="22" rx="1.500" /><path d="M18.500 1H25v22h-6.500z" fill="#e8e8ed" /></Line>
        <Gap $w={19} />
        <Line w={26}><path d="M1 4.500V20.500A2.500 2.500 0 0 0 3.500 23H23a2 2 0 0 0 2-2V7a2 2 0 0 0-2-2H2.500A1.500 1.500 0 0 1 1 3.500 2 2 0 0 1 3 1h16.500A1.500 1.500 0 0 1 21 2.500V5M25 10h-8.500a2 2 0 0 0-2 2v3a2 2 0 0 0 2 2H25M18.500 13.500h1" /></Line>
        <Gap $w={19} />
        <Line w={26} h={26}><path d="M12 1.500c1 6 4 9 10 10.500-6 1.500-9 4.500-10 10.500C11 16.500 8 13.500 2 12 8 10.500 11 7.500 12 1.500z" /><path d="M21 16.500c.5 2.800 1.500 3.900 4.500 4.500-3 .6-4 1.700-4.500 4.500-.5-2.800-1.500-3.900-4.500-4.500 3-.6 4-1.700 4.500-4.500z" fill="#e8e8ed" stroke="none" /></Line>
        <Gap $w={20} />
        <Line w={24} h={28}><path d="M12 2 22.500 5.500V14c0 6-4.500 10-10.500 12.500C6 24 1.500 20 1.500 14V5.500z" /><path d="M5.500 12c4-3.500 9-3.500 13 0M7.500 15c3-2.300 6-2.300 9 0M10 18c1.300-1 2.700-1 4 0" /></Line>
        <Gap $w={20} />
        <Striped />
        <Gap $w={19} />
        <Line w={27} color="#f4f4f7" sw={2}><path d="M2 3h23M2 12h23M2 21h23" /></Line>
      </Extensions>
    </Toolbar>
  </ToolbarWrap>
);

const AdminPage = () => (
  <Page>
    <Sidebar>
      <Brand>Admin Panel</Brand>
      <Nav>
        <NavItem><LayoutDashboard size={28.8} strokeWidth={2} />Dashboard</NavItem>
        <NavItem><Users size={28.8} />Users</NavItem>
        <NavItem><HistoryIcon />All History</NavItem>
        <NavItem><MessageSquareIcon />Feedback</NavItem>
      </Nav>
      <SidebarFooter>
        <LogoutButton><LogOut size={28.8} />Logout</LogoutButton>
      </SidebarFooter>
    </Sidebar>
    <Main>
      <TopBar>
        <Sun size={28.8} />
        <Avatar>SA</Avatar>
        <UserName>shaka (Admin)</UserName>
      </TopBar>
      <Content>
        <TitleRow>
          <Title>User Feedback</Title>
          <Total><MessageSquare size={24} />1 Total</Total>
        </TitleRow>
        <Card>
          <CardHead>
            <Stars>
              {[0, 1, 2, 3, 4].map((i) => (
                <Star key={i} size={24} color={i < 3 ? "#fbbf24" : "#d1d5db"} fill={i < 3 ? "#fbbf24" : "none"} />
              ))}
            </Stars>
            <DateText>10/29/2025</DateText>
          </CardHead>
          <Quote>"soo badly"</Quote>
          <Author>
            <AuthorName>sharma</AuthorName>
            <AuthorMail>shaka@gmail.com</AuthorMail>
          </Author>
        </Card>
      </Content>
    </Main>
  </Page>
);

function MessageSquareIcon() {
  return <MessageSquare size={28.8} />;
}

const SystemBar = () => (
  <Taskbar>
    <Widget>
      <svg width="46" height="46" viewBox="0 0 46 46">
        <g fill="url(#chart)"><rect x="3" y="36" width="6.500" height="5" rx="1.500" /><rect x="12" y="33" width="6.500" height="8" rx="1.500" /><rect x="21" y="27" width="6.500" height="14" rx="1.500" /><rect x="30" y="16" width="6.800" height="25" rx="1.500" /></g>
        <path d="M4 29c9-2 16-6 22-12" fill="none" stroke="#1f8f17" strokeWidth="4" />
        <circle cx="30.500" cy="12" r="12" fill="#ff99a4" />
        <text x="30.500" y="17.500" textAnchor="middle" fontSize="16" fontFamily="Noto Sans, sans-serif" fill="#000">5</text>
      </svg>
    </Widget>
    <Apps>
      {apps.map((a) => (
        <AppSlot key={a.id}>{a.art}{a.running && <Running $w={6} $h={5} $top={12} />}</AppSlot>
      ))}
    </Apps>
    <ActiveApps>
      <ActiveApp>
        <svg width="30" height="34" viewBox="0 0 30 34">
          <svg x="3.500" y="8" width="20" height="24"><Lion fill="url(#brave)" w={20} h={24} /></svg>
          <svg x="13" y="8" width="13" height="13"><Striped size={13} /></svg>
          <circle cx="26.500" cy="5.500" r="3" fill="#9d9d9d" />
        </svg>
        <Running $w={16} $h={5} $top={11} />
      </ActiveApp>
      <svg width="20" height="4" viewBox="0 0 20 4" fill="#fff"><circle cx="2" cy="2" r="2" /><circle cx="10" cy="2" r="2" /><circle cx="18" cy="2" r="2" /></svg>
    </ActiveApps>
    <Tray>
      <Line w={18} h={12} color="#fff" sw={2}><path d="m2 9.500 7-7 7 7" /></Line>
      <Gap $w={27} />
      <Line color="#fff" sw={1.3}><path d="M1 12.500C1 6 6 1 12 1c5 0 8.500 2.500 10.500 6.500M23 .8v7h-7M1.500 23v-6.500h7M2 17c3 5 7 6.500 11 6" /><circle cx="18" cy="18" r="6" fill="#ff9800" stroke="none" /></Line>
      <Gap $w={24} />
      <Line sw={1.5}><path d="M5.500 19.500a5 5 0 0 1-.5-10A7.500 7.500 0 0 1 18.500 8.500 5.600 5.600 0 0 1 19 19.500z" fill="#777" stroke="none" /><path d="m2 2 20 20" stroke="#d8d8d8" /></Line>
      <Gap $w={24} />
      <Line color="#fff" sw={1.8}><path d="M1 8.500c6-6.500 16-6.500 22 0M4.500 12.500c4.500-4.600 10.500-4.600 15 0M8 16c2.500-2.400 5.500-2.400 8 0" /><circle cx="12" cy="18.500" r="1.500" fill="#fff" /></Line>
      <Gap $w={12} />
      <Line w={25} color="#fff" sw={1.6}><path d="M1 9v6.500h4l5.500 5V4L5 9zM13.500 9c1.500 2 1.500 4.500 0 6.500M17 6c3 4 3 8.500 0 12.500M20.500 3.500c4 5 4 12.500 0 17.500" /></Line>
      <Gap $w={11} />
      <Line w={25} color="#fff" sw={1.7}><path d="M14 4.500h5a2 2 0 0 1 2 2v10.500a2 2 0 0 1-2 2H4M22 9.500h1.500V14H22" /><path d="M8 0c4.500 4.500 4 14-4.500 15.500C-1.500 12.500 1 6 3.500 4L5 7z" fill="#fff" stroke="none" /><path d="M2 18c1-4.500 2.500-7 4.500-9" stroke="#1c1c1c" strokeWidth="1" /><path d="M1 19c.3-1.500.8-2.500 1.500-4" /></Line>
      <Clock>8:56 PM<br />10/29/2025</Clock>
    </Tray>
  </Taskbar>
);

export default function App() {
  return (
    <>
      <Global />
      <Gradients />
      <Screen>
        <Tabs />
        <BrowserBar />
        <AdminPage />
        <SystemBar />
      </Screen>
    </>
  );
}
